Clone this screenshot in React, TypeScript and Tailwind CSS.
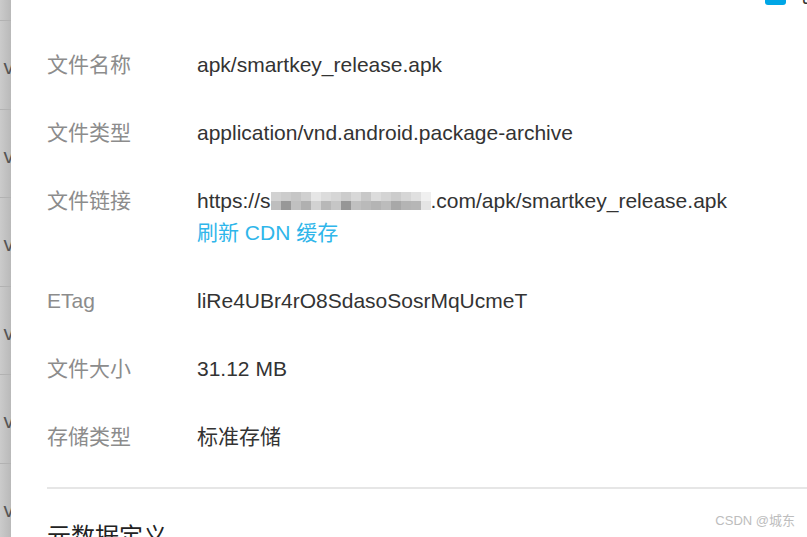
import React from "react";

const FONT = { fontFamily: '"Liberation Sans", "Noto Sans CJK SC", Arial, sans-serif' };

const mosaic: number[][] = [
  [0xd2, 0xcc, 0xc6, 0xd0, 0xe6, 0xdc, 0xd6, 0xcc, 0xd8, 0xc8, 0xdc, 0xd4, 0xcc, 0xd6, 0xe0, 0xf0],
  [0xbe, 0x98, 0xc0, 0xb0, 0xd2, 0xb8, 0xc6, 0x96, 0xc0, 0xba, 0xb4, 0xbc, 0xa8, 0xb4, 0xb6, 0xe4],
];

function Mosaic() {
  return (
    <span className="inline-flex flex-col align-middle w-[160px] h-[18px] -mt-[2px]">
      {mosaic.map((row, i) => (
        <span key={i} className="flex h-[9px]">
          {row.map((v, j) => (
            <span
              key={j}
              className="h-full flex-1"
              style={{ backgroundColor: `rgb(${v},${v},${v})` }}
            />
          ))}
        </span>
      ))}
    </span>
  );
}

function Row({ label, children }: { label: string; children: React.ReactNode }) {
  return (
    <div className="flex shrink-0 leading-[32px]">
      <div className="w-[150px] shrink-0 text-[#8c8c8c]">{label}</div>
      <div className="text-[#333333]">{children}</div>
    </div>
  );
}

export default function App() {
  return (
    <div className="relative flex h-[537px] w-[807px] overflow-hidden bg-white" style={FONT}>
      {/* left background strip */}
      <div className="w-[11px] shrink-0 bg-gradient-to-r from-[#cbcbcb] to-[#b9b9b9] flex flex-col overflow-hidden">
        <div className="h-[20px] shrink-0" />
        {Array.from({ length: 6 }).map((_, i) => (
          <div
            key={i}
            className="h-[88.5px] shrink-0 border-t border-[#b2b2b2] flex justify-end pt-[30px] text-[21px] leading-[32px] text-[#555]"
          >
            <span className="-mr-[3px]">v</span>
          </div>
        ))}
      </div>

      {/* drawer panel */}
      <div className="flex-1 flex flex-col text-[21px] overflow-hidden">
        <div className="h-[5px] shrink-0 overflow-hidden">
          <div className="flex justify-end items-center -mt-[16px] h-[21px]">
            <span className="w-[21px] h-[21px] shrink-0 rounded-[3px] bg-[#00a6e6]" />
            <span className="ml-[14px] -mr-[14px] text-[21px] leading-[21px] text-[#333]">已</span>
          </div>
        </div>

        <div className="pl-[36px] pt-[44px] flex flex-col gap-[36px] shrink-0">
          <Row label="文件名称">apk/smartkey_release.apk</Row>
          <Row label="文件类型">application/vnd.android.package-archive</Row>
          <Row label="文件链接">
            <div className="whitespace-nowrap">
              https://s
              <Mosaic />
              .com/apk/smartkey_release.apk
            </div>
            <div className="text-[#2fb6ea]">刷新 CDN 缓存</div>
          </Row>
          <Row label="ETag">liRe4UBr4rO8SdasoSosrMqUcmeT</Row>
          <Row label="文件大小">31.12 MB</Row>
          <Row label="存储类型">标准存储</Row>
        </div>

        <div className="ml-[36px] mt-[34px] h-[2px] shrink-0 bg-[#e6e6e6]" />

        <div className="ml-[36px] mt-[30px] shrink-0 text-[24px] leading-[36px] text-[#222]">元数据定义</div>
      </div>

      <div className="absolute right-[12px] bottom-[7px] text-[13px] text-[#bdbdbd]">CSDN @城东</div>
    </div>
  );
}
